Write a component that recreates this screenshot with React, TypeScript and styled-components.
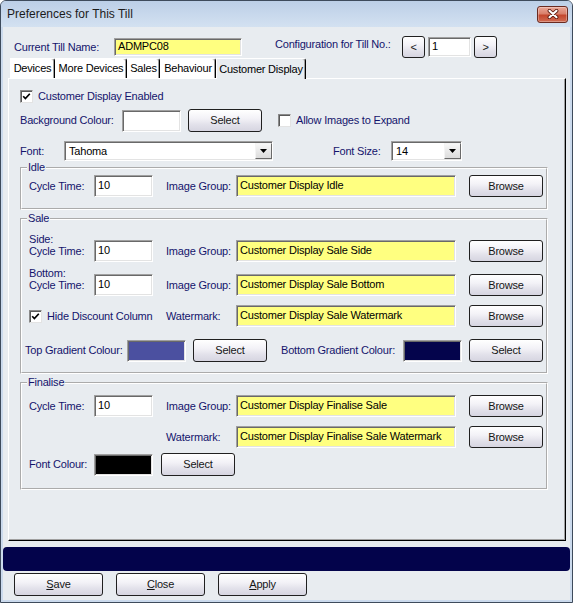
import React from 'react'
import styled, { createGlobalStyle } from 'styled-components'

const FACE = '#e8ecf0'
const NAVY = '#14146c'
const YELLOW = '#ffff80'

const GlobalStyle = createGlobalStyle`
  body {
    margin: 0;
    background: #ffffff;
  }
`

const Window = styled.div`
  box-sizing: border-box;
  width: 573px;
  height: 603px;
  display: flex;
  flex-direction: column;
  background: #cbdaed;
  border: 1px solid #3e4b5c;
  border-radius: 6px 6px 0 0;
  overflow: hidden;
  font-family: 'Liberation Sans', Arial, sans-serif;
  font-size: 11px;
  line-height: 13px;
  letter-spacing: -0.2px;
`

const TitleBar = styled.div`
  flex: none;
  height: 26px;
  display: flex;
  align-items: center;
  justify-content: space-between;
  padding: 0 4px 0 6px;
  background: linear-gradient(#bccfe7, #d3e1f1);
`

const Title = styled.span`
  font-size: 12px;
  letter-spacing: 0;
  color: #1b1b1b;
`

const CloseButton = styled.div`
  box-sizing: border-box;
  width: 31px;
  height: 17px;
  display: flex;
  align-items: center;
  justify-content: center;
  border: 1px solid #6a2a20;
  border-radius: 3px;
  background: linear-gradient(#eaa797, #d9806b 45%, #c4472e 55%, #d06c52);
  box-shadow: inset 0 0 0 1px rgba(255, 255, 255, 0.3);
`

const Client = styled.div`
  flex: 1;
  margin: 0 2px 2px;
  display: flex;
  flex-direction: column;
  background: ${FACE};
`

const HeaderRow = styled.div`
  display: flex;
  align-items: center;
  height: 22px;
  margin-top: 9px;
  padding-left: 11px;
`

const Label = styled.span<{ $w?: number; $ml?: number }>`
  flex: none;
  width: ${({ $w }) => ($w ? `${$w}px` : 'auto')};
  margin-left: ${({ $ml = 0 }) => $ml}px;
  color: ${NAVY};
  white-space: nowrap;
`

// sits a little higher than the boxes beside it
const RaisedLabel = styled(Label)`
  margin-bottom: 5px;
`

// two line caption whose last line lines up with the row
const StackLabel = styled(Label)`
  line-height: 12px;
  margin-top: -12px;
`

const Field = styled.div<{ $w: number; $h?: number; $bg?: string; $ml?: number }>`
  box-sizing: border-box;
  flex: none;
  width: ${({ $w }) => $w}px;
  height: ${({ $h = 22 }) => $h}px;
  margin-left: ${({ $ml = 0 }) => $ml}px;
  padding: ${({ $h = 22 }) => ($h - 16) / 2}px 3px 0;
  background: ${({ $bg = '#ffffff' }) => $bg};
  border: 1px solid;
  border-color: #a0a0a0 #ffffff #ffffff #a0a0a0;
  box-shadow: inset 1px 1px #696969, inset -1px -1px #e3e3e3;
  color: #000;
  white-space: nowrap;
  overflow: hidden;
`

const Button = styled.button<{ $w: number; $h?: number; $ml?: number }>`
  box-sizing: border-box;
  flex: none;
  width: ${({ $w }) => $w}px;
  height: ${({ $h = 23 }) => $h}px;
  margin: 0 0 0 ${({ $ml = 0 }) => $ml}px;
  padding: 0;
  font: inherit;
  letter-spacing: inherit;
  color: #161616;
  border: 1px solid #202020;
  border-radius: 3px;
  background: linear-gradient(#ffffff, #f3f2f7 40%, #e2e1ea 70%, #d6d5e1);
`

const CheckItem = styled.label<{ $ml?: number }>`
  flex: none;
  display: flex;
  align-items: center;
  gap: 5px;
  margin-left: ${({ $ml = 0 }) => $ml}px;
  color: ${NAVY};
  white-space: nowrap;
`

const Box = styled.span`
  box-sizing: border-box;
  flex: none;
  width: 13px;
  height: 13px;
  display: flex;
  align-items: center;
  justify-content: center;
  background: #ffffff;
  border: 1px solid;
  border-color: #8a8a8a #e3e3e3 #e3e3e3 #8a8a8a;
  box-shadow: inset 1px 1px #5a5a5a;
`

const Combo = styled.div<{ $w: number; $ml?: number }>`
  box-sizing: border-box;
  flex: none;
  width: ${({ $w }) => $w}px;
  height: 20px;
  margin-left: ${({ $ml = 0 }) => $ml}px;
  display: flex;
  align-items: center;
  justify-content: space-between;
  padding-left: 4px;
  background: #ffffff;
  border: 1px solid;
  border-color: #a0a0a0 #ffffff #ffffff #a0a0a0;
  box-shadow: inset 1px 1px #696969, inset -1px -1px #e3e3e3;
  color: #000;
`

const DropButton = styled.span`
  box-sizing: border-box;
  width: 17px;
  height: 16px;
  display: flex;
  align-items: center;
  justify-content: center;
  background: linear-gradient(#f7f7f7, #dcdcdc);
  border: 1px solid;
  border-color: #f4f4f4 #6a6a6a #6a6a6a #f4f4f4;
`

const TabStrip = styled.div`
  display: flex;
  align-items: flex-end;
  height: 20px;
  padding-left: 7px;
`

const Tab = styled.div<{ $w: number; $active?: boolean }>`
  box-sizing: border-box;
  position: relative;
  z-index: 1;
  width: ${({ $w }) => $w}px;
  height: ${({ $active }) => ($active ? 21 : 20)}px;
  margin-bottom: ${({ $active }) => ($active ? -1 : 0)}px;
  display: flex;
  align-items: center;
  justify-content: center;
  background: ${({ $active }) => ($active ? FACE : '#ffffff')};
  border: 1px solid #ffffff;
  border-right-color: #000000;
  border-bottom: none;
  border-top-right-radius: 3px;
  box-shadow: inset -1px 0 #a0a0a0;
  color: #000;
  white-space: nowrap;
`

const Panel = styled.div`
  box-sizing: border-box;
  height: 463px;
  margin: 0 4px 0 5px;
  padding: 11px 0 0 11px;
  display: flex;
  flex-direction: column;
  border: 1px solid;
  border-color: #ffffff #000000 #000000 #ffffff;
  box-shadow: inset -1px -1px #a0a0a0;
`

const Row = styled.div<{ $mt?: number; $ml?: number }>`
  display: flex;
  align-items: center;
  margin-top: ${({ $mt = 0 }) => $mt}px;
  margin-left: ${({ $ml = 0 }) => $ml}px;
`

const Group = styled.fieldset<{ $pad: string; $mt?: number }>`
  box-sizing: border-box;
  width: 528px;
  min-width: 0;
  margin: ${({ $mt = 0 }) => $mt}px 0 0;
  padding: ${({ $pad }) => $pad};
  border: 2px groove #ffffff;
`

const Legend = styled.legend`
  padding: 0 1px;
  margin-left: -2px;
  line-height: 13px;
  color: ${NAVY};
`

const Lead = styled.div`
  flex: none;
  width: 137px;
  display: flex;
  align-items: center;
`

const NavyBar = styled.div`
  flex: none;
  height: 24px;
  margin-top: 6px;
  border-radius: 4px;
  background: #03034b;
`

const ActionRow = styled.div`
  display: flex;
  gap: 13px;
  margin-top: 2px;
  padding-left: 11px;
`

const Tick = () => (
  <svg width="9" height="9" viewBox="0 0 9 9">
    <path d="M1.2 4.2 L3.4 6.6 L7.8 1.8" fill="none" stroke="#000" strokeWidth="1.7" />
  </svg>
)

const Check = ({ on, text, ml }: { on?: boolean; text: string; ml?: number }) => (
  <CheckItem $ml={ml}>
    <Box>{on && <Tick />}</Box>
    {text}
  </CheckItem>
)

const Select = ({ w, value, ml }: { w: number; value: string; ml?: number }) => (
  <Combo $w={w} $ml={ml}>
    {value}
    <DropButton>
      <svg width="7" height="4" viewBox="0 0 7 4">
        <polygon points="0,0 7,0 3.5,4" fill="#000" />
      </svg>
    </DropButton>
  </Combo>
)

const CycleTime = ({ caption }: { caption?: string }) => (
  <>
    {caption ? (
      <StackLabel $w={65}>
        {caption}
        <br />
        Cycle Time:
      </StackLabel>
    ) : (
      <Label $w={65}>Cycle Time:</Label>
    )}
    <Field $w={59}>10</Field>
  </>
)

type ImageRowProps = {
  lead?: React.ReactNode
  caption: string
  value: string
  mt?: number
}

const ImageRow = ({ lead, caption, value, mt }: ImageRowProps) => (
  <Row $mt={mt}>
    <Lead>{lead}</Lead>
    <Label $w={70}>{caption}</Label>
    <Field $w={220} $bg={YELLOW}>
      {value}
    </Field>
    <Button $w={74} $h={22} $ml={13}>
      Browse
    </Button>
  </Row>
)

const tabs = [
  { name: 'Devices', w: 45 },
  { name: 'More Devices', w: 72 },
  { name: 'Sales', w: 33 },
  { name: 'Behaviour', w: 56 },
  { name: 'Customer Display', w: 90, active: true },
]

export default function App() {
  return (
    <>
      <GlobalStyle />
      <Window>
        <TitleBar>
          <Title>Preferences for This Till</Title>
          <CloseButton>
            <svg width="14" height="10" viewBox="0 0 14 10">
              <path d="M3.5 1.8 L10.5 8.2 M10.5 1.8 L3.5 8.2" stroke="#5b1a10" strokeWidth="3.8" strokeLinecap="round" />
              <path d="M3.5 1.8 L10.5 8.2 M10.5 1.8 L3.5 8.2" stroke="#ffffff" strokeWidth="2.1" strokeLinecap="round" />
            </svg>
          </CloseButton>
        </TitleBar>

        <Client>
          <HeaderRow>
            <Label $w={100}>Current Till Name:</Label>
            <Field $w={128} $h={18} $bg={YELLOW}>
              ADMPC08
            </Field>
            <RaisedLabel $w={127} $ml={33}>
              Configuration for Till No.:
            </RaisedLabel>
            <Button $w={23} $h={22}>
              &lt;
            </Button>
            <Field $w={43} $h={20} $ml={3}>
              1
            </Field>
            <Button $w={23} $h={22} $ml={3}>
              &gt;
            </Button>
          </HeaderRow>

          <TabStrip>
            {tabs.map((t) => (
              <Tab key={t.name} $w={t.w} $active={t.active}>
                {t.name}
              </Tab>
            ))}
          </TabStrip>

          <Panel>
            <Row>
              <Check on text="Customer Display Enabled" />
            </Row>

            <Row $mt={6}>
              <Label $w={102}>Background Colour:</Label>
              <Field $w={59} />
              <Button $w={74} $ml={7}>
                Select
              </Button>
              <Check text="Allow Images to Expand" ml={16} />
            </Row>

            <Row $mt={9}>
              <Label $w={44}>Font:</Label>
              <Select w={209} value="Tahoma" />
              <Label $w={58} $ml={60}>
                Font Size:
              </Label>
              <Select w={71} value="14" />
            </Row>

            <Group $pad="1px 3px 11px 7px">
              <Legend>Idle</Legend>
              <ImageRow lead={<CycleTime />} caption="Image Group:" value="Customer Display Idle" />
            </Group>

            <Group $pad="15px 3px 10px 7px" $mt={2}>
              <Legend>Sale</Legend>
              <ImageRow lead={<CycleTime caption="Side:" />} caption="Image Group:" value="Customer Display Sale Side" />
              <ImageRow
                lead={<CycleTime caption="Bottom:" />}
                caption="Image Group:"
                value="Customer Display Sale Bottom"
                mt={12}
              />
              <ImageRow
                lead={<Check on text="Hide Discount Column" />}
                caption="Watermark:"
                value="Customer Display Sale Watermark"
                mt={9}
              />
              <Row $mt={12} $ml={-4}>
                <Label $w={102}>Top Gradient Colour:</Label>
                <Field $w={59} $bg="#4b50a0" />
                <Button $w={74} $ml={7}>
                  Select
                </Button>
                <Label $w={122} $ml={14}>
                  Bottom Gradient Colour:
                </Label>
                <Field $w={59} $bg="#04044c" />
                <Button $w={74} $ml={7}>
                  Select
                </Button>
              </Row>
            </Group>

            <Group $pad="6px 3px 12px 7px" $mt={2}>
              <Legend>Finalise</Legend>
              <ImageRow lead={<CycleTime />} caption="Image Group:" value="Customer Display Finalise Sale" />
              <ImageRow caption="Watermark:" value="Customer Display Finalise Sale Watermark" mt={9} />
              <Row $mt={5}>
                <Label $w={65}>Font Colour:</Label>
                <Field $w={59} $bg="#000000" />
                <Button $w={74} $ml={8}>
                  Select
                </Button>
              </Row>
            </Group>
          </Panel>

          <NavyBar />

          <ActionRow>
            <Button $w={89}>
              <u>S</u>ave
            </Button>
            <Button $w={89}>
              <u>C</u>lose
            </Button>
            <Button $w={89}>
              <u>A</u>pply
            </Button>
          </ActionRow>
        </Client>
      </Window>
    </>
  )
}
